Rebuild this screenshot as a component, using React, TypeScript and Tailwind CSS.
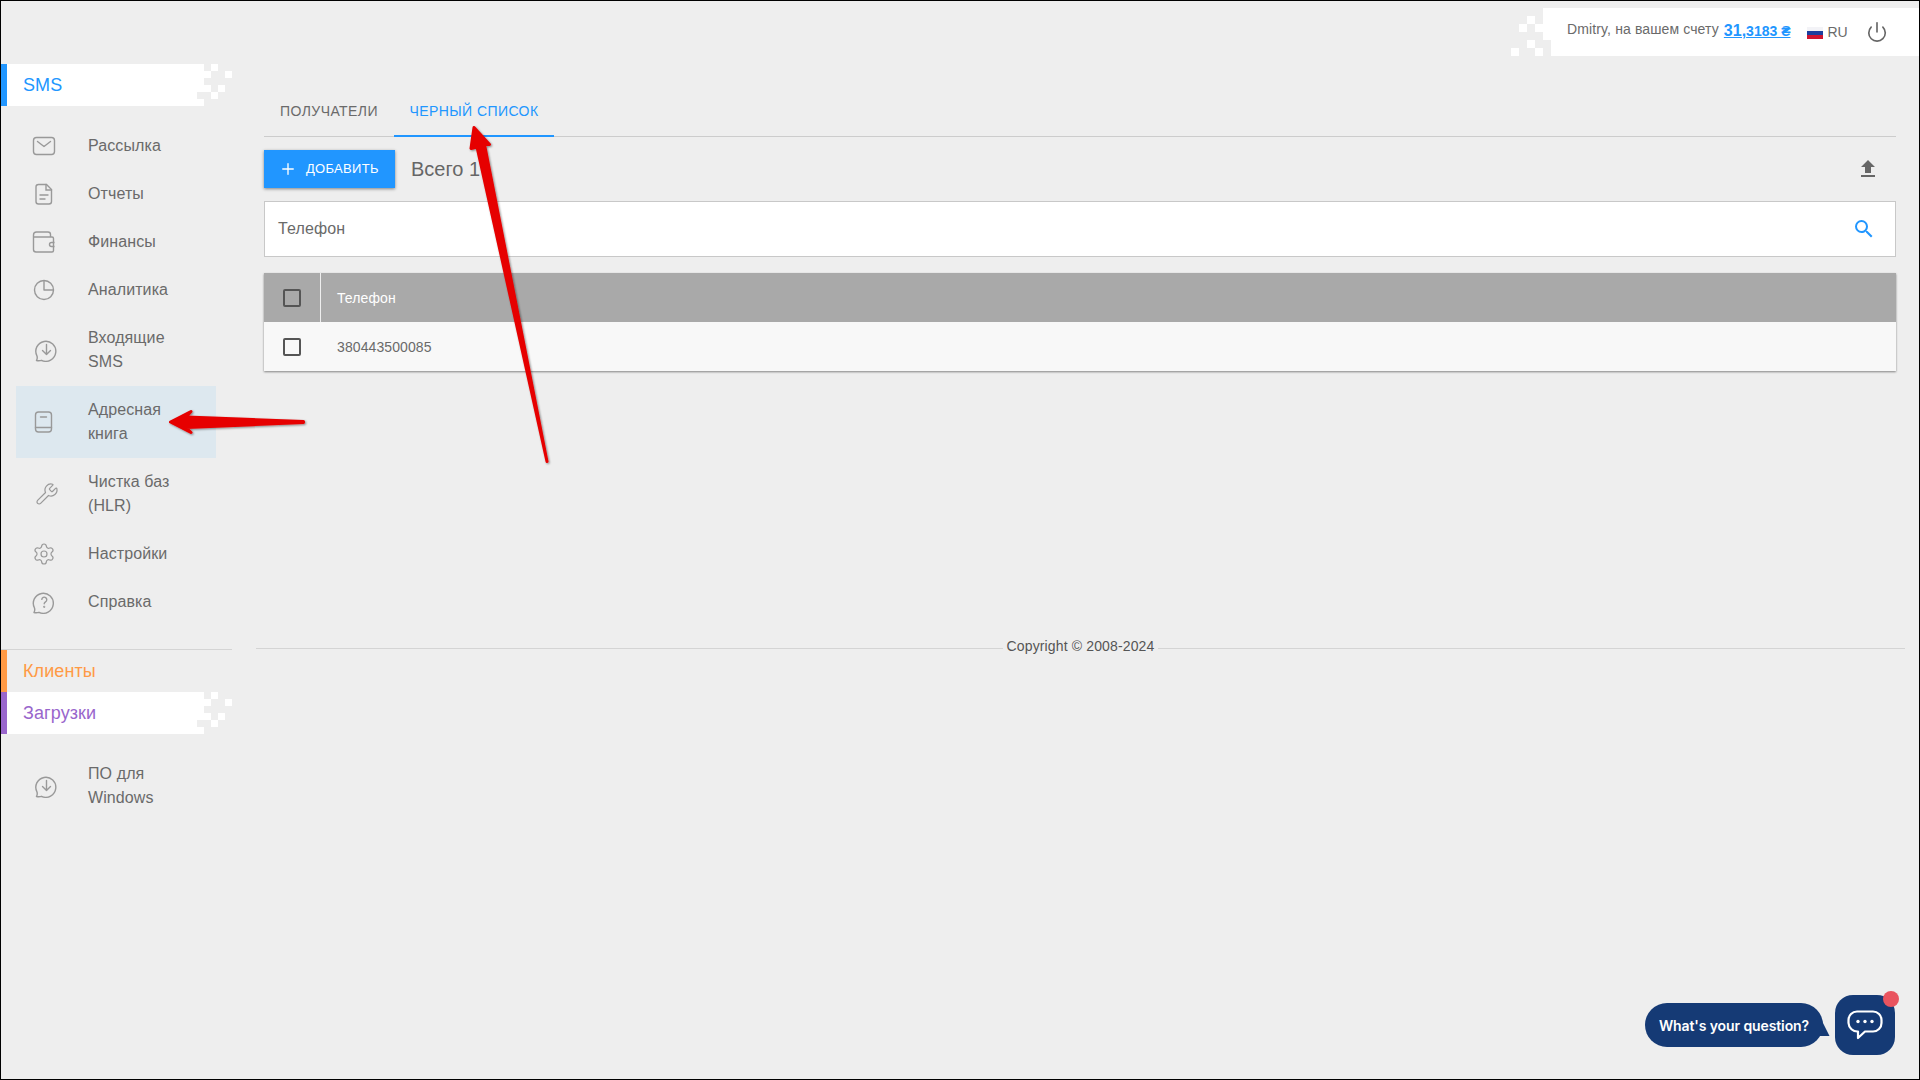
import React from "react";
import { Plus, Power, Settings, Wrench } from "lucide-react";

const ICON = "w-[24px] h-[24px] fill-none stroke-[#999999] stroke-[1.4]";

function MailIcon() {
  return (
    <svg viewBox="0 0 24 24" className={ICON}>
      <rect x="1.5" y="3.5" width="21" height="17" rx="3" />
      <path d="M5.5 7.5l6.5 5 6.5-5" strokeLinecap="round" strokeLinejoin="round" />
    </svg>
  );
}

function DocIcon() {
  return (
    <svg viewBox="0 0 24 24" className={ICON}>
      <path d="M6.5 2.5h8l5 5v12a2.5 2.5 0 0 1-2.500 2.500h-10.500a2.500 2.500 0 0 1-2.500-2.500v-14.500a2.500 2.500 0 0 1 2.500-2.500z" />
      <path d="M14 2.500v5.500h5.500M8 13h8M8 17h5" strokeLinecap="round" />
    </svg>
  );
}

function WalletIcon() {
  return (
    <svg viewBox="0 0 24 24" className={ICON}>
      <path d="M18.500 7V4.500a2.500 2.500 0 0 0-2.500-2.500h-11.500a3 3 0 0 0-3 3v14.500a2.500 2.500 0 0 0 2.500 2.500h16a1.500 1.500 0 0 0 1.500-1.500v-12a1.500 1.500 0 0 0-1.500-1.500h-19" />
      <path d="M22.500 12.500h-3a2 2 0 0 0 0 4h3" />
    </svg>
  );
}

function PieIcon() {
  return (
    <svg viewBox="0 0 24 24" className={ICON}>
      <circle cx="12" cy="12" r="9.500" />
      <path d="M12 2.500V12h9.500" strokeLinejoin="round" />
    </svg>
  );
}

function DownloadBubbleIcon() {
  return (
    <svg viewBox="0 0 24 24" className={`${ICON} ml-[2px]`}>
      <path d="M2.500 22.500c1-1.500 1-2.500.5-4.500a10 10 0 1 1 4.500 4.300c-1.500.5-3.500.500-5 .2z" strokeLinejoin="round" />
      <path d="M12.500 6.500v10M8.500 12.500l4 4 4-4" strokeLinecap="round" strokeLinejoin="round" />
    </svg>
  );
}

function BookIcon() {
  return (
    <svg viewBox="0 0 24 24" className={ICON}>
      <rect x="3.500" y="2" width="16" height="20" rx="3" />
      <path d="M3.500 17.500h16M8.500 7h6" strokeLinecap="round" />
    </svg>
  );
}

function HelpIcon() {
  return (
    <svg viewBox="0 0 24 24" className={ICON}>
      <path d="M2 22.500c1-1.500 1-2.500.5-4.500a10 10 0 1 1 4.500 4.300c-1.500.5-3.500.500-5 .2z" strokeLinejoin="round" />
      <path d="M9.800 9.300a2.500 2.500 0 1 1 3.700 2.500c-.9.600-1.300 1-1.300 2" strokeLinecap="round" />
      <circle cx="12.200" cy="16.800" r=".4" />
    </svg>
  );
}

const NAV_TOP = [
  { label: ["Рассылка"], icon: <MailIcon /> },
  { label: ["Отчеты"], icon: <DocIcon /> },
  { label: ["Финансы"], icon: <WalletIcon /> },
  { label: ["Аналитика"], icon: <PieIcon /> },
  { label: ["Входящие", "SMS"], icon: <DownloadBubbleIcon /> },
  { label: ["Адресная", "книга"], icon: <BookIcon />, active: true },
  {
    label: ["Чистка баз", "(HLR)"],
    icon: <Wrench size={24} strokeWidth={1.2} color="#999999" className="ml-[3px]" />,
  },
  { label: ["Настройки"], icon: <Settings size={24} strokeWidth={1.2} color="#999999" /> },
  { label: ["Справка"], icon: <HelpIcon /> },
];

function NavItem({
  label,
  icon,
  active,
}: {
  label: string[];
  icon: React.ReactNode;
  active?: boolean;
}) {
  return (
    <div
      className={`flex items-center w-[200px] ml-[15px] pl-[16px] py-[12px] text-[16px] leading-[24px] tracking-[0.1px] text-[#6a6a6a] ${
        active ? "bg-[#dde8ef]" : ""
      }`}
    >
      <div className="w-[28px] shrink-0 flex">{icon}</div>
      <div className="ml-[28px]">
        {label.map((line) => (
          <div key={line}>{line}</div>
        ))}
      </div>
    </div>
  );
}

function TabPixels() {
  return (
    <svg width="35" height="42" className="block shrink-0 fill-white">
      <rect x="0" y="0" width="7" height="7" />
      <rect x="14" y="0" width="7" height="7" />
      <rect x="0" y="7" width="14" height="7" />
      <rect x="28" y="7" width="7" height="7" />
      <rect x="0" y="14" width="7" height="7" />
      <rect x="0" y="21" width="14" height="7" />
      <rect x="21" y="21" width="7" height="7" />
      <rect x="14" y="28" width="7" height="7" />
      <rect x="0" y="35" width="7" height="7" />
    </svg>
  );
}

function TopPixels() {
  return (
    <svg width="40" height="48" className="block shrink-0 fill-white">
      <rect x="32" y="0" width="8" height="8" />
      <rect x="16" y="8" width="8" height="8" />
      <rect x="32" y="8" width="8" height="8" />
      <rect x="8" y="16" width="8" height="8" />
      <rect x="24" y="16" width="16" height="8" />
      <rect x="32" y="24" width="8" height="8" />
      <rect x="16" y="32" width="8" height="8" />
      <rect x="0" y="40" width="8" height="8" />
      <rect x="24" y="40" width="8" height="8" />
    </svg>
  );
}

function SideTab({
  title,
  accent,
  color,
  open,
}: {
  title: string;
  accent: string;
  color: string;
  open?: boolean;
}) {
  return (
    <div className="flex h-[42px] w-[231px]">
      <div className={`w-[6px] shrink-0 ${accent}`} />
      <div className={`w-[190px] pl-[16px] text-[18px] leading-[42px] tracking-[0.1px] ${color} ${open ? "bg-white" : ""}`}>
        {title}
      </div>
      {open && <TabPixels />}
    </div>
  );
}

function CheckBox() {
  return <div className="w-[18px] h-[18px] rounded-[2px] border-2 border-[#555555]" />;
}

function Arrows() {
  return (
    <svg width="1920" height="1080" className="absolute left-0 top-0 pointer-events-none">
      <defs>
        <filter id="arrowShadow" x="-20%" y="-20%" width="140%" height="140%">
          <feDropShadow dx="1" dy="1" stdDeviation="1" floodColor="#000000" floodOpacity="0.45" />
        </filter>
      </defs>
      <g filter="url(#arrowShadow)" fill="#e60000" stroke="#e60000" strokeLinejoin="round">
        <path d="M473 126.500L488.500 143.500L483.500 143.500L546 460.500L476 146L470 147.500Z" strokeWidth="3" />
        <path d="M169.500 421L190 410.500L185 416L302.500 420.500L302.500 421.500L185 426.500L190 431.500Z" strokeWidth="3" />
      </g>
    </svg>
  );
}

function ChatWidget() {
  return (
    <div className="absolute right-[24px] bottom-[24px] flex items-center">
      <div className="relative h-[44px] w-[178px] mr-[12px] rounded-[22px] bg-[#153a75] text-white text-[14px] font-semibold leading-[46px] tracking-[-0.1px] text-center font-['Inter',sans-serif]">
        What's your question?
        <svg width="17" height="24" className="absolute left-[168px] top-[10px] fill-[#153a75]">
          <path d="M0 0L5 0L16.500 23H0Z" />
        </svg>
      </div>
      <div className="relative w-[60px] h-[60px] rounded-[18px] bg-[#153a75] flex items-center justify-center">
        <svg viewBox="0 0 36 30" width="36" height="30" className="fill-none stroke-white stroke-[2.200]">
          <path d="M10 1.500h16a8.500 8.500 0 0 1 8.500 8.500v3a8.500 8.500 0 0 1-8.500 8.500h-8l-7 6.500v-6.500a9 9 0 0 1-9.500-8.500v-3a8.500 8.500 0 0 1 8.500-8.500z" strokeLinejoin="round" />
          <circle cx="11" cy="11.500" r="1.700" className="fill-white stroke-none" />
          <circle cx="18" cy="11.500" r="1.700" className="fill-white stroke-none" />
          <circle cx="25" cy="11.500" r="1.700" className="fill-white stroke-none" />
        </svg>
        <div className="absolute right-[-4px] top-[-4px] w-[16px] h-[16px] rounded-full bg-[#e9545f]" />
      </div>
    </div>
  );
}

export default function App() {
  return (
    <div className="relative w-screen h-screen overflow-hidden box-border border border-black bg-[#eeeeee] font-['Liberation_Sans',Arial,sans-serif] text-[#666666]">
      <div className="flex justify-end mt-[7px] h-[48px]">
        <TopPixels />
        <div className="bg-white w-[368px] flex items-center pl-[16px]">
          <span className="text-[14px] tracking-[0.12px] text-[#6a6a6a] -mt-[6px]">Dmitry, на вашем счету</span>
          <span className="ml-[5px] font-bold text-[#2196ff] underline text-[14px] -mt-[2px]">
            <span className="text-[16px]">31,</span>3183 ₴
          </span>
          <svg width="16" height="12" className="ml-[17px] mt-[1px] shrink-0">
            <rect width="16" height="4" fill="#f3f3f7" />
            <rect y="4" width="16" height="4" fill="#1c3f9e" />
            <rect y="8" width="16" height="4" fill="#cf1530" />
          </svg>
          <span className="ml-[4px] text-[14px] text-[#6a6a6a]">RU</span>
          <Power size={22} strokeWidth={1.8} color="#666666" className="ml-[18px]" />
        </div>
      </div>

      <div className="flex">
        <aside className="w-[232px] shrink-0 pt-[8px]">
          <SideTab title="SMS" accent="bg-[#2196ff]" color="text-[#2196ff]" open />
          <nav className="mt-[16px]">
            {NAV_TOP.map((item) => (
              <NavItem key={item.label[0]} {...item} />
            ))}
          </nav>
          <div className="mt-[23px] h-px w-[231px] bg-[#d4d4d4]" />
          <SideTab title="Клиенты" accent="bg-[#ff9a45]" color="text-[#ff9a45]" />
          <SideTab title="Загрузки" accent="bg-[#9966cc]" color="text-[#9966cc]" open />
          <div className="mt-[16px]">
            <NavItem label={["ПО для", "Windows"]} icon={<DownloadBubbleIcon />} />
          </div>
        </aside>

        <main className="flex-1 ml-[23px] mr-[14px] pt-[32px]">
          <div className="pl-[8px] pr-[9px]">
            <div className="flex h-[49px] border-b border-[#cccccc] text-[14px] leading-[46px] tracking-[0.42px] uppercase">
              <div className="w-[130px] text-center text-[#6a6a6a]">Получатели</div>
              <div className="w-[160px] h-[49px] text-center text-[#2196ff] border-b-2 border-[#2196ff]">
                Черный список
              </div>
            </div>

            <div className="flex items-center mt-[13px] h-[38px]">
              <button className="flex items-center h-[38px] w-[131px] pl-[15px] bg-[#2196ff] text-white text-[13px] tracking-[0.3px] shadow-[0_1px_3px_rgba(0,0,0,0.45)]">
                <Plus size={18} strokeWidth={1.8} />
                <span className="ml-[9px]">ДОБАВИТЬ</span>
              </button>
              <div className="ml-[16px] text-[20px] text-[#666666]">Всего 1</div>
              <svg viewBox="0 0 24 24" width="24" height="24" className="ml-auto mr-[16px] fill-[#666666]">
                <path d="M9 16h6v-6h4l-7-7-7 7h4zm-4 2h14v2H5z" />
              </svg>
            </div>

            <div className="flex items-center justify-between h-[56px] mt-[13px] bg-white border border-[#c8c8c8] pl-[13px] pr-[19px] text-[16px] tracking-[0.1px] text-[#6a6a6a]">
              <span>Телефон</span>
              <svg viewBox="0 0 24 24" width="24" height="24" className="fill-[#2196ff]">
                <path d="M15.500 14h-.79l-.28-.27A6.470 6.470 0 0 0 16 9.500 6.500 6.500 0 1 0 9.500 16c1.610 0 3.090-.59 4.230-1.570l.27.28v.79l5 4.990L20.490 19l-4.990-5zm-6 0C7.010 14 5 11.990 5 9.500S7.010 5 9.500 5 14 7.010 14 9.500 11.990 14 9.500 14z" />
              </svg>
            </div>

            <div className="mt-[16px] shadow-[0_1px_2px_rgba(0,0,0,0.45)]">
              <div className="flex h-[49px] bg-[#a9a9a9]">
                <div className="w-[57px] flex items-center justify-center border-r border-[#eeeeee]">
                  <CheckBox />
                </div>
                <div className="pl-[16px] text-[14px] leading-[51px] tracking-[0.1px] text-white">Телефон</div>
              </div>
              <div className="flex h-[49px] bg-[#f8f8f8]">
                <div className="w-[56px] flex items-center justify-center">
                  <CheckBox />
                </div>
                <div className="pl-[17px] text-[14px] leading-[51px] tracking-[0.1px] text-[#6a6a6a]">380443500085</div>
              </div>
            </div>
          </div>

          <div className="flex items-center mt-[268px] h-[18px] text-[14px] text-[#555555]">
            <div className="flex-1 h-px bg-[#d4d4d4]" />
            <span className="px-[4px] tracking-[0.14px] -mt-[3px]">Copyright © 2008-2024</span>
            <div className="flex-1 h-px bg-[#d4d4d4]" />
          </div>
        </main>
      </div>

      <Arrows />
      <ChatWidget />
    </div>
  );
}
